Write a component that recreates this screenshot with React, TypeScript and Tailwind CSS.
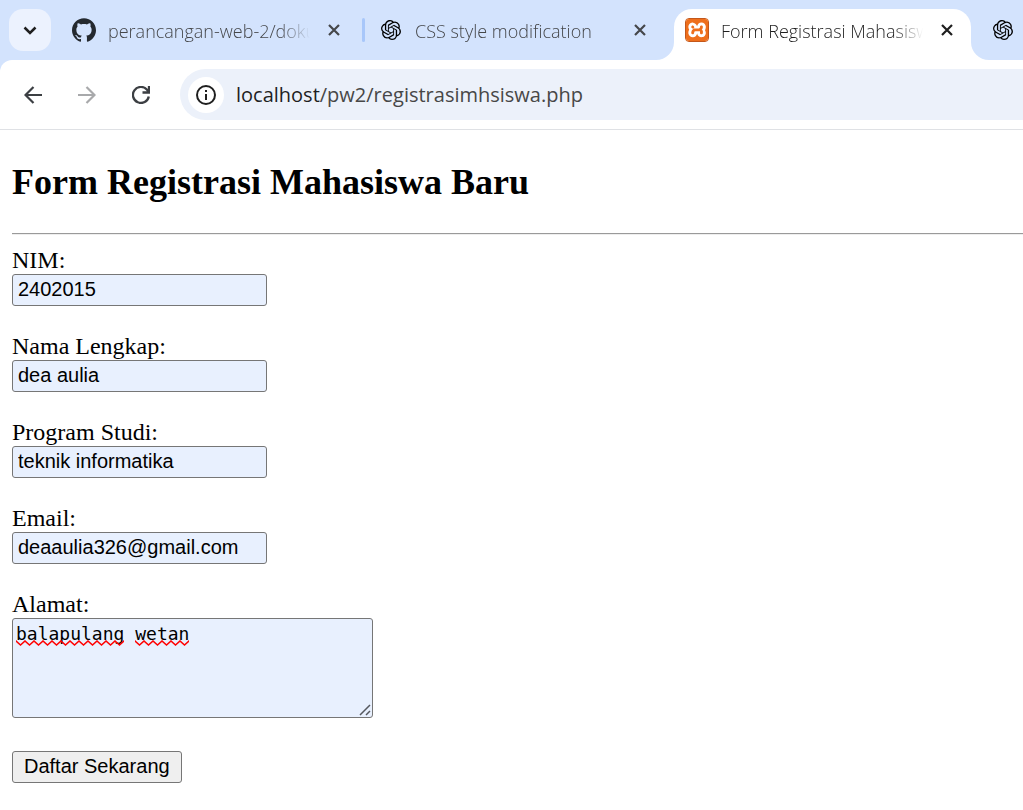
import type { ReactNode } from 'react';
import { SiGithub, SiOpenai, SiXampp } from 'react-icons/si';

function CloseIcon() {
  return (
    <svg viewBox="0 0 12 12" className="size-3" fill="none" stroke="currentColor" strokeWidth="2.2" aria-hidden="true">
      <path d="M1 1l10 10M11 1L1 11" />
    </svg>
  );
}

function TabLabel({ children }: { children: ReactNode }) {
  return (
    <span className="min-w-0 flex-1 overflow-hidden pt-0.5 text-lg leading-6 font-[350] whitespace-nowrap mask-r-from-85%">
      {children}
    </span>
  );
}

function CloseButton({ name }: { name: string }) {
  return (
    <button type="button" aria-label={`Tutup ${name}`} className="flex size-6 shrink-0 items-center justify-center">
      <CloseIcon />
    </button>
  );
}

function TabStrip() {
  return (
    <div className="flex h-15 items-start overflow-hidden bg-[#d3e3fd] pt-[9px] pl-[9px] text-[#45474a]">
      <button
        type="button"
        aria-label="Cari tab"
        className="flex size-[42px] shrink-0 items-center justify-center rounded-[14px] bg-[#ecf2fe] text-[#1f1f1f]"
      >
        <svg viewBox="0 0 14 9" className="h-[9px] w-[14px]" fill="none" stroke="currentColor" strokeWidth="2.5" aria-hidden="true">
          <path d="M1.500 1.500L7 7l5.500-5.500" />
        </svg>
      </button>

      <div className="ml-[21px] flex h-[42px] w-[274px] shrink-0 items-center">
        <SiGithub className="mr-3 size-6 shrink-0 text-[#24292f]" />
        <TabLabel>perancangan-web-2/doku</TabLabel>
        <span className="w-3" />
        <CloseButton name="perancangan-web-2" />
      </div>
      <span className="mt-[9px] ml-4 h-6 w-[3px] shrink-0 rounded-full bg-[#a8c7fa]" />

      <div className="ml-4 flex h-[42px] w-[271px] shrink-0 items-center">
        <SiOpenai className="mr-3.5 size-5 shrink-0 text-black" />
        <TabLabel>CSS style modification</TabLabel>
        <CloseButton name="CSS style modification" />
      </div>

      <svg viewBox="0 0 18 18" className="mt-[33px] ml-1 size-[18px] shrink-0" fill="#fff" aria-hidden="true">
        <path d="M18 0v18H0A18 18 0 0 0 18 0z" />
      </svg>
      <div className="flex h-[51px] w-[297px] shrink-0 items-start rounded-t-[18px] bg-white pr-3 pl-[11px] text-[#1f1f1f]">
        <div className="flex h-[42px] w-full items-center">
          <span className="mr-3 flex size-6 shrink-0 items-center justify-center overflow-hidden rounded border border-[#c4571a] bg-white">
            <SiXampp className="size-6 shrink-0 text-[#ee6f1c]" />
          </span>
          <TabLabel>Form Registrasi Mahasisw</TabLabel>
          <span className="w-3" />
          <CloseButton name="Form Registrasi Mahasiswa" />
        </div>
      </div>
      <svg viewBox="0 0 18 18" className="mt-[33px] size-[18px] shrink-0" fill="#fff" aria-hidden="true">
        <path d="M0 0v18h18A18 18 0 0 1 0 0z" />
      </svg>
      <SiOpenai className="mt-[11px] ml-1 size-5 shrink-0 text-black" />
    </div>
  );
}

function Toolbar() {
  return (
    <div className="bg-[#d3e3fd]">
      <div className="flex h-[70px] items-center rounded-tl-xl border-b border-[#dfe1e5] bg-white pl-6 text-[#3c3f43]">
        <button type="button" aria-label="Kembali" className="flex size-[18px] shrink-0 items-center justify-center">
          <svg viewBox="0 0 18 18" className="size-[18px]" fill="none" stroke="currentColor" strokeWidth="2.200" aria-hidden="true">
            <path d="M18 9H2M9.500 1L1.500 9l8 8" />
          </svg>
        </button>
        <button type="button" aria-label="Maju" className="ml-9 flex size-[18px] shrink-0 items-center justify-center text-[#a8a9ab]">
          <svg viewBox="0 0 18 18" className="size-[18px]" fill="none" stroke="currentColor" strokeWidth="2.200" aria-hidden="true">
            <path d="M0 9h16M8.500 1l8 8-8 8" />
          </svg>
        </button>
        <button type="button" aria-label="Muat ulang" className="ml-9 flex size-[18px] shrink-0 items-center justify-center">
          <svg viewBox="0 0 18 18" className="size-[18px]" fill="none" stroke="currentColor" strokeWidth="2.300" aria-hidden="true">
            <path d="M16.800 10.500A8 8 0 1 1 14.800 3.500L17 6M17 0v6.500h-6.500" />
          </svg>
        </button>
        <div className="ml-[30px] flex h-[51px] min-w-0 flex-1 items-center rounded-l-full bg-[#ecf1fa] pl-2">
          <button
            type="button"
            aria-label="Lihat informasi situs"
            className="flex size-9 shrink-0 items-center justify-center rounded-full bg-white text-[#1f1f1f]"
          >
            <svg viewBox="0 0 20 20" className="size-5" fill="none" stroke="currentColor" strokeWidth="2" aria-hidden="true">
              <circle cx="10" cy="10" r="9" />
              <path d="M10 9v6M10 5v2" />
            </svg>
          </button>
          <a href="#form" className="ml-3 truncate text-xl leading-7 text-[#474747]">
            <span className="text-[#1f1f1f]">localhost</span>/pw2/registrasimhsiswa.php
          </a>
        </div>
      </div>
    </div>
  );
}

const fields = [
  { id: 'nim', label: 'NIM:', type: 'text', value: '2402015' },
  { id: 'nama', label: 'Nama Lengkap:', type: 'text', value: 'dea aulia' },
  { id: 'prodi', label: 'Program Studi:', type: 'text', value: 'teknik informatika' },
  { id: 'email', label: 'Email:', type: 'email', value: 'deaaulia326@gmail.com' },
];

function Squiggle({ className }: { className: string }) {
  return (
    <svg className={className} aria-hidden="true">
      <defs>
        <pattern id="wave" width="9" height="6" patternUnits="userSpaceOnUse">
          <path d="M-1 1.700L0 1L4.500 5L9 1L10 1.700" fill="none" stroke="#f00" strokeWidth="1.500" />
        </pattern>
      </defs>
      <rect width="100%" height="6" fill="url(#wave)" />
    </svg>
  );
}

export default function App() {
  return (
    <div className="min-h-screen bg-white">
      <header className="font-['Open_Sans','Noto_Sans',sans-serif]">
        <TabStrip />
        <Toolbar />
      </header>
      <main className="pt-[31px] pl-3 font-['Liberation_Serif',serif] text-2xl leading-7 text-black">
        <h2 className="text-4xl leading-[42px] font-bold">Form Registrasi Mahasiswa Baru</h2>
        <hr className="mt-[30px] mb-[11px] border-t border-b border-t-[#9a9a9a] border-b-[#eeeeee]" />
        <form id="form" className="flex flex-col items-start">
          {fields.map((f) => (
            <div key={f.id} className="mb-[26px] flex flex-col">
              <label htmlFor={f.id}>{f.label}</label>
              <input
                id={f.id}
                type={f.type}
                defaultValue={f.value}
                className="h-8 w-[255px] rounded-[3px] border border-[#767676] bg-[#e8f0fe] px-[5px] pb-0.5 font-['Liberation_Sans',sans-serif] text-xl leading-6"
              />
            </div>
          ))}
          <div className="flex flex-col">
            <label htmlFor="alamat">Alamat:</label>
            <div className="relative flex">
              <textarea
                id="alamat"
                defaultValue="balapulang wetan"
                spellCheck={false}
                className="h-[100px] w-[361px] resize-none rounded-[3px] border border-[#767676] bg-[#e8f0fe] px-[3px] py-1 font-['DejaVu_Sans_Mono',monospace] text-lg leading-[22px]"
              />
              <Squiggle className="pointer-events-none absolute top-[22px] left-1 h-[6px] w-[108px]" />
              <Squiggle className="pointer-events-none absolute top-[22px] left-[123px] h-[6px] w-[54px]" />
              <svg viewBox="0 0 12 12" className="pointer-events-none absolute right-0.5 bottom-0.5 size-3" stroke="#55585e" strokeWidth="1.500" aria-hidden="true">
                <path d="M1 11L11 1M7 11l4-4" />
              </svg>
            </div>
          </div>
          <button
            type="submit"
            className="mt-[33px] h-8 rounded-[3px] border border-[#767676] bg-[#efefef] px-[11px] pb-0.5 font-['Liberation_Sans',sans-serif] text-xl leading-6"
          >
            Daftar Sekarang
          </button>
        </form>
      </main>
    </div>
  );
}
